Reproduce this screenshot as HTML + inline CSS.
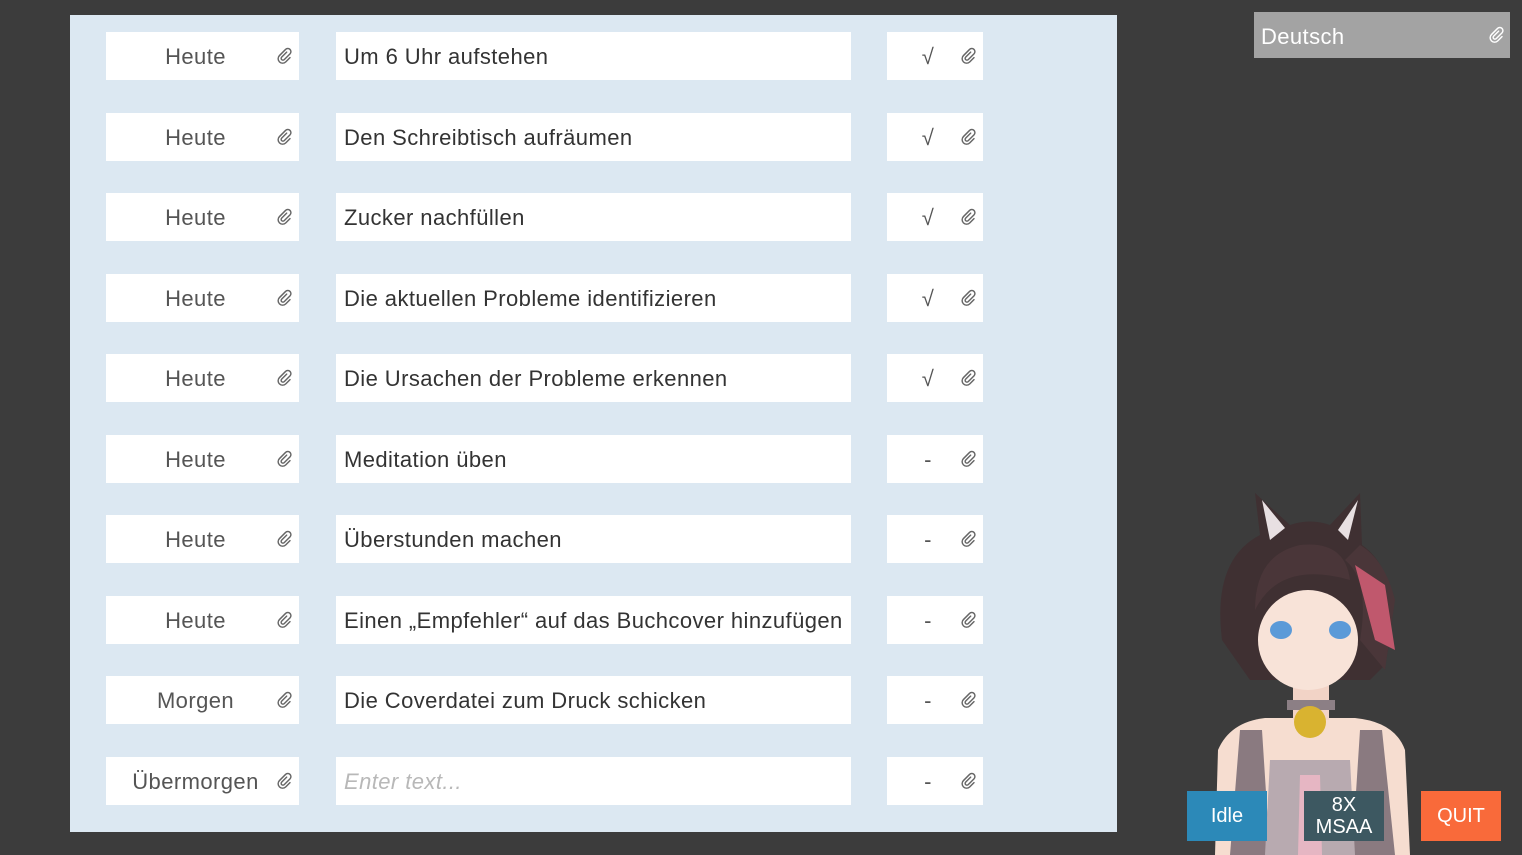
<!DOCTYPE html>
<html><head><meta charset="utf-8"><style>
*{margin:0;padding:0;box-sizing:border-box}
body{width:1522px;height:855px;background:#3c3c3c;position:relative;overflow:hidden;font-family:"Liberation Sans",sans-serif}
.panel{position:absolute;left:70px;top:15px;width:1047px;height:817px;background:#dce8f2}
.b{position:absolute;background:#fff;height:48px;display:flex;align-items:center;font-size:22px;letter-spacing:0.42px;color:#333;padding-top:2px}
.d{left:36px;width:193px;justify-content:center;padding-right:14px;color:#555}
.t{left:266px;width:515px;padding-left:8px}
.s{left:817px;width:96px;justify-content:center;padding-right:14px;color:#555}
.clip{position:absolute;right:4px;top:14px;width:20px;height:20px}
.ph{color:#b8b8b8;font-style:italic}
.btn{position:absolute;top:791px;width:80px;height:50px;color:#fff;font-size:20px;display:flex;align-items:center;justify-content:center;text-align:center;line-height:22px}
</style></head><body>
<svg width="0" height="0" style="position:absolute"><defs><symbol id="c" viewBox="0 0 18 18"><path d="M10.5 5.5 L6 10 a1.6 1.6 0 0 0 2.3 2.3 L13.5 7.1 a2.8 2.8 0 0 0 -4 -4 L4 8.6 a4 4 0 0 0 5.7 5.7 L13.5 10.5" fill="none" stroke="#666" stroke-width="1.3" stroke-linecap="round"/></symbol></defs></svg>
<div class="panel">
<div style="position:absolute;top:17px;left:0;right:0">
<div class="b d" style="top:0">Heute<svg class="clip"><use href="#c"/></svg></div><div class="b t" style="top:0">Um 6 Uhr aufstehen</div><div class="b s" style="top:0">√<svg class="clip"><use href="#c"/></svg></div>
<div class="b d" style="top:80.5px">Heute<svg class="clip"><use href="#c"/></svg></div><div class="b t" style="top:80.5px">Den Schreibtisch aufräumen</div><div class="b s" style="top:80.5px">√<svg class="clip"><use href="#c"/></svg></div>
<div class="b d" style="top:161px">Heute<svg class="clip"><use href="#c"/></svg></div><div class="b t" style="top:161px">Zucker nachfüllen</div><div class="b s" style="top:161px">√<svg class="clip"><use href="#c"/></svg></div>
<div class="b d" style="top:241.5px">Heute<svg class="clip"><use href="#c"/></svg></div><div class="b t" style="top:241.5px">Die aktuellen Probleme identifizieren</div><div class="b s" style="top:241.5px">√<svg class="clip"><use href="#c"/></svg></div>
<div class="b d" style="top:322px">Heute<svg class="clip"><use href="#c"/></svg></div><div class="b t" style="top:322px">Die Ursachen der Probleme erkennen</div><div class="b s" style="top:322px">√<svg class="clip"><use href="#c"/></svg></div>
<div class="b d" style="top:402.5px">Heute<svg class="clip"><use href="#c"/></svg></div><div class="b t" style="top:402.5px">Meditation üben</div><div class="b s" style="top:402.5px">-<svg class="clip"><use href="#c"/></svg></div>
<div class="b d" style="top:483px">Heute<svg class="clip"><use href="#c"/></svg></div><div class="b t" style="top:483px">Überstunden machen</div><div class="b s" style="top:483px">-<svg class="clip"><use href="#c"/></svg></div>
<div class="b d" style="top:563.5px">Heute<svg class="clip"><use href="#c"/></svg></div><div class="b t" style="top:563.5px">Einen „Empfehler“ auf das Buchcover hinzufügen</div><div class="b s" style="top:563.5px">-<svg class="clip"><use href="#c"/></svg></div>
<div class="b d" style="top:644px">Morgen<svg class="clip"><use href="#c"/></svg></div><div class="b t" style="top:644px">Die Coverdatei zum Druck schicken</div><div class="b s" style="top:644px">-<svg class="clip"><use href="#c"/></svg></div>
<div class="b d" style="top:724.5px">Übermorgen<svg class="clip"><use href="#c"/></svg></div><div class="b t ph" style="top:724.5px">Enter text...</div><div class="b s" style="top:724.5px">-<svg class="clip"><use href="#c"/></svg></div>
</div></div>
<div style="position:absolute;left:1254px;top:12px;width:256px;height:46px;background:#a3a3a3;color:#fff;font-size:22px;letter-spacing:0.4px;display:flex;align-items:center;padding-left:7px;padding-top:3px">Deutsch<svg style="position:absolute;right:3px;top:13px;width:20px;height:20px" viewBox="0 0 18 18"><path d="M10.5 5.5 L6 10 a1.6 1.6 0 0 0 2.3 2.3 L13.5 7.1 a2.8 2.8 0 0 0 -4 -4 L4 8.6 a4 4 0 0 0 5.7 5.7 L13.5 10.5" fill="none" stroke="#fff" stroke-width="1.3" stroke-linecap="round"/></svg></div>
<svg style="position:absolute;left:0;top:0" width="1522" height="855">
<path d="M1215 855 L1218 750 Q1230 722 1265 718 L1355 718 Q1395 722 1405 750 L1410 855 Z" fill="#f6ddd0"/>
<path d="M1240 730 L1262 730 L1270 855 L1230 855 Z M1360 730 L1382 730 L1395 855 L1352 855 Z" fill="#8a7a80"/>
<path d="M1270 760 L1350 760 L1355 855 L1265 855 Z" fill="#b8aab0"/>
<path d="M1300 775 L1320 775 L1322 855 L1298 855 Z" fill="#e6b6c3"/>
<rect x="1293" y="670" width="36" height="50" fill="#f2d3c6"/>
<rect x="1287" y="700" width="48" height="10" fill="#8c7f85"/>
<circle cx="1310" cy="722" r="16" fill="#d9b330"/>
<path d="M1222 640 Q1212 560 1260 535 L1255 493 L1290 525 Q1310 518 1330 525 L1360 493 L1362 545 Q1405 575 1385 665 L1370 680 L1250 680 Z" fill="#3f3032"/>
<path d="M1262 500 L1270 540 L1285 528 Z M1358 500 L1348 540 L1338 530 Z" fill="#e8e0e2"/>
<ellipse cx="1308" cy="640" rx="50" ry="50" fill="#f8e3d8"/>
<path d="M1255 610 Q1280 560 1350 580 Q1345 540 1300 545 Q1255 555 1255 610 Z" fill="#4a3639"/>
<path d="M1345 560 Q1370 580 1360 640 L1385 670 L1395 600 Q1385 560 1360 545 Z" fill="#4a3639"/>
<path d="M1355 565 L1385 585 L1395 650 L1375 640 Z" fill="#c0586d"/>
<ellipse cx="1281" cy="630" rx="11" ry="9" fill="#5b9ad8"/>
<ellipse cx="1340" cy="630" rx="11" ry="9" fill="#5b9ad8"/>
<rect x="1187" y="791" width="80" height="50" fill="#2c89b8"/>
<rect x="1304" y="791" width="80" height="50" fill="#3d5861"/>
<rect x="1421" y="791" width="80" height="50" fill="#f96a3a"/>
</svg>
<div class="btn" style="left:1187px">Idle</div>
<div class="btn" style="left:1304px">8X<br>MSAA</div>
<div class="btn" style="left:1421px">QUIT</div>
</body></html>
